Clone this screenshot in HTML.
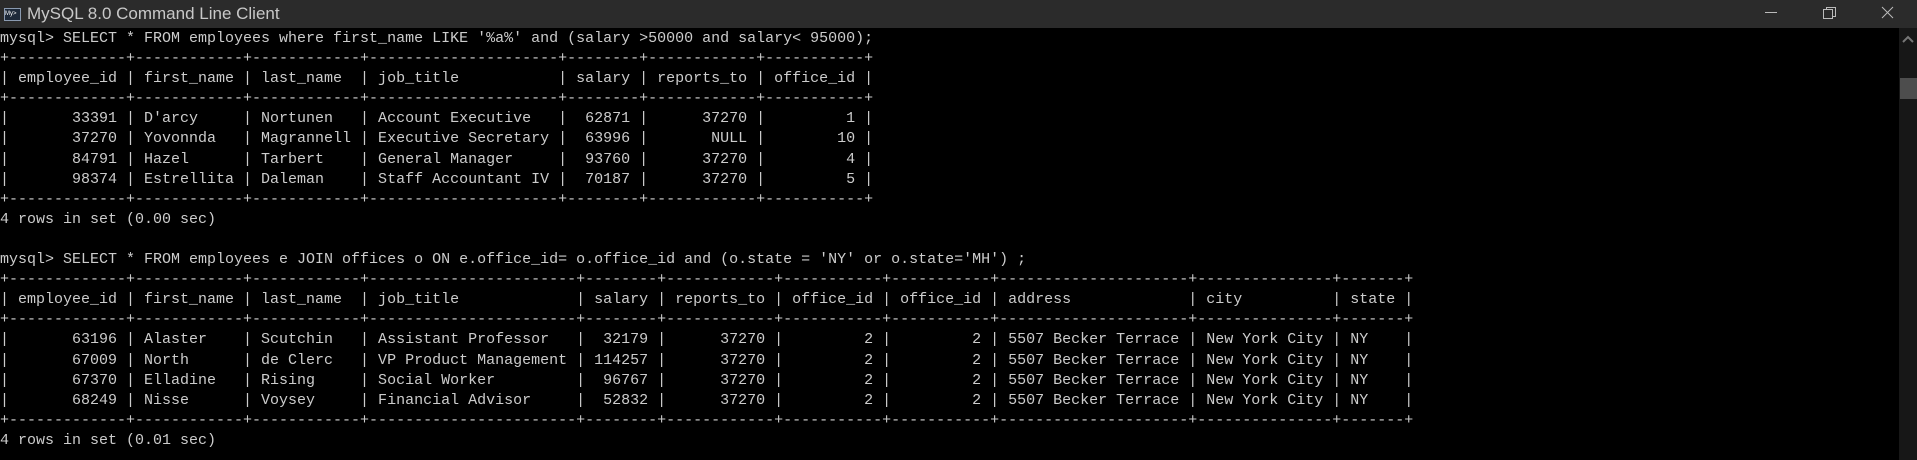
<!DOCTYPE html>
<html><head><meta charset="utf-8"><style>
html,body{margin:0;padding:0;background:#000;width:1917px;height:460px;overflow:hidden}
#title{position:absolute;left:0;top:0;width:1917px;height:28px;background:#2b2b2b;color:#c8c8c8;font:17px "Liberation Sans",sans-serif}
#title .t{position:absolute;left:27px;top:4px}
#title .ic{position:absolute;left:4px;top:8px;width:15px;height:11px;background:#1e2a3a;border:1px solid #8a9ab0;font:6px "Liberation Sans";color:#fff;line-height:11px}
#sb{position:absolute;left:1899px;top:28px;width:18px;height:432px;background:#171717}
#thumb{position:absolute;left:1px;top:50px;width:17px;height:21px;background:#4d4d4d}
pre{position:absolute;left:0;top:29px;margin:0;color:#cccccc;font:15px/20.1px "Liberation Mono",monospace;white-space:pre}
</style></head><body>
<div id="title"><div class="ic">My&gt;</div><span class="t">MySQL 8.0 Command Line Client</span>
<svg style="position:absolute;left:1760px;top:0" width="157" height="28"><line x1="5" y1="12.5" x2="17" y2="12.5" stroke="#bbb" stroke-width="1"/><rect x="63.5" y="9.5" width="9" height="9" fill="none" stroke="#bbb"/><path d="M66.5 9.5V7.5h9v9h-3" fill="none" stroke="#bbb"/><path d="M122 7l11 11M133 7l-11 11" stroke="#bbb" stroke-width="1"/></svg></div>
<div id="sb"><svg width="18" height="16" style="position:absolute;top:4px"><path d="M4 10l5-5 5 5" fill="none" stroke="#777" stroke-width="2"/></svg><div id="thumb"></div></div>
<pre>mysql&gt; SELECT * FROM employees where first_name LIKE '%a%' and (salary &gt;50000 and salary&lt; 95000);
+-------------+------------+------------+---------------------+--------+------------+-----------+
| employee_id | first_name | last_name  | job_title           | salary | reports_to | office_id |
+-------------+------------+------------+---------------------+--------+------------+-----------+
|       33391 | D'arcy     | Nortunen   | Account Executive   |  62871 |      37270 |         1 |
|       37270 | Yovonnda   | Magrannell | Executive Secretary |  63996 |       NULL |        10 |
|       84791 | Hazel      | Tarbert    | General Manager     |  93760 |      37270 |         4 |
|       98374 | Estrellita | Daleman    | Staff Accountant IV |  70187 |      37270 |         5 |
+-------------+------------+------------+---------------------+--------+------------+-----------+
4 rows in set (0.00 sec)

mysql&gt; SELECT * FROM employees e JOIN offices o ON e.office_id= o.office_id and (o.state = 'NY' or o.state='MH') ;
+-------------+------------+------------+-----------------------+--------+------------+-----------+-----------+---------------------+---------------+-------+
| employee_id | first_name | last_name  | job_title             | salary | reports_to | office_id | office_id | address             | city          | state |
+-------------+------------+------------+-----------------------+--------+------------+-----------+-----------+---------------------+---------------+-------+
|       63196 | Alaster    | Scutchin   | Assistant Professor   |  32179 |      37270 |         2 |         2 | 5507 Becker Terrace | New York City | NY    |
|       67009 | North      | de Clerc   | VP Product Management | 114257 |      37270 |         2 |         2 | 5507 Becker Terrace | New York City | NY    |
|       67370 | Elladine   | Rising     | Social Worker         |  96767 |      37270 |         2 |         2 | 5507 Becker Terrace | New York City | NY    |
|       68249 | Nisse      | Voysey     | Financial Advisor     |  52832 |      37270 |         2 |         2 | 5507 Becker Terrace | New York City | NY    |
+-------------+------------+------------+-----------------------+--------+------------+-----------+-----------+---------------------+---------------+-------+
4 rows in set (0.01 sec)
</pre>
</body></html>
